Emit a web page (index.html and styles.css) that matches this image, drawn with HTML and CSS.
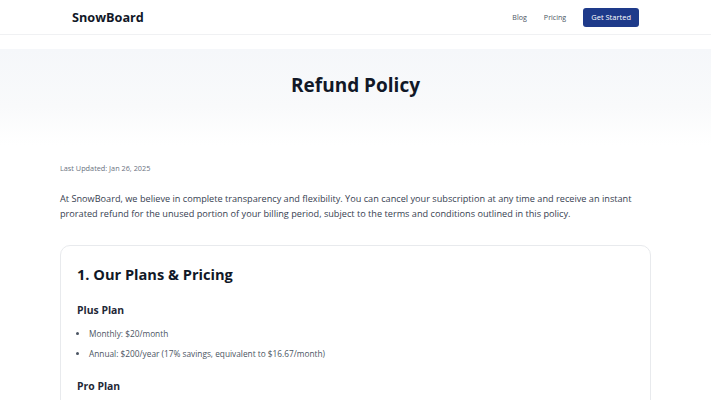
FILE: index.html
```html
<!DOCTYPE html>
<html lang="en">
<head>
<meta charset="utf-8">
<title>Refund Policy - SnowBoard</title>
<link rel="stylesheet" href="styles.css">
</head>
<body>
<header class="site-header">
  <div class="header-inner">
    <a class="logo" href="#">SnowBoard</a>
    <nav class="nav">
      <a class="nav-link" href="#">Blog</a>
      <a class="nav-link" href="#">Pricing</a>
      <a class="btn-primary" href="#">Get Started</a>
    </nav>
  </div>
</header>
<section class="hero">
  <h1 class="hero-title">Refund Policy</h1>
</section>
<main class="content">
  <p class="updated">Last Updated: Jan 26, 2025</p>
  <p class="intro">At SnowBoard, we believe in complete transparency and flexibility. You can cancel your subscription at any time and receive an instant prorated refund for the unused portion of your billing period, subject to the terms and conditions outlined in this policy.</p>
  <section class="card">
    <h2 class="card-title">1. Our Plans &amp; Pricing</h2>
    <h3 class="plan-title">Plus Plan</h3>
    <ul class="plan-list">
      <li>Monthly: $20/month</li>
      <li>Annual: $200/year (17% savings, equivalent to $16.67/month)</li>
    </ul>
    <h3 class="plan-title">Pro Plan</h3>
    <ul class="plan-list">
      <li>Monthly: $50/month</li>
      <li>Annual: $500/year (17% savings, equivalent to $41.67/month)</li>
    </ul>
  </section>
</main>
</body>
</html>
```
FILE: styles.css
```css
* { box-sizing: border-box; }
html, body { margin: 0; padding: 0; }
body {
  font-family: "Open Sans", "Noto Sans", sans-serif;
  color: #111827;
  background: #ffffff;
}
a { text-decoration: none; }

.site-header {
  height: 35px;
  border-bottom: 1px solid #f0f1f3;
  background: #fff;
}
.header-inner {
  width: 567px;
  margin: 0 auto;
  height: 100%;
  display: flex;
  align-items: center;
  justify-content: space-between;
}
.logo {
  font-size: 12.7px;
  font-weight: 700;
  color: #111827;
}
.nav {
  display: flex;
  align-items: center;
  gap: 17px;
}
.nav-link {
  font-size: 7.1px;
  color: #4b5563;
}
.btn-primary {
  background: #1e3a8a;
  color: #fff;
  font-size: 7.5px;
  height: 19px;
  padding: 0 8px;
  display: flex;
  align-items: center;
  border-radius: 3px;
}

.hero {
  margin-top: 14px;
  height: 96px;
  background: linear-gradient(180deg, #f5f7fa 0%, #f9fafb 60%, #ffffff 100%);
  display: flex;
  justify-content: center;
  padding-top: 22px;
}
.hero-title {
  margin: 0;
  font-size: 19px;
  font-weight: 700;
  line-height: 28px;
  color: #111827;
}

.content {
  width: 591px;
  margin: 0 auto;
  padding-top: 17px;
}
.updated {
  margin: 0;
  font-size: 7.3px;
  line-height: 12px;
  color: #6b7280;
}
.intro {
  margin: 17px 0 0;
  font-size: 9.16px;
  line-height: 15px;
  color: #374151;
}
.card {
  margin-top: 24px;
  border: 1px solid #e8eaed;
  border-radius: 10px;
  padding: 18px 16px 20px;
}
.card-title {
  margin: 0;
  font-size: 14.6px;
  font-weight: 700;
  line-height: 20px;
  color: #111827;
}
.plan-title {
  margin: 18px 0 0;
  font-size: 10.4px;
  font-weight: 700;
  line-height: 16px;
  color: #1f2937;
}
.plan-list {
  margin: 10px 0 0;
  padding-left: 12px;
  font-size: 8.3px;
  line-height: 12px;
  color: #4b5563;
}
.plan-list li { margin-bottom: 8px; }
```
